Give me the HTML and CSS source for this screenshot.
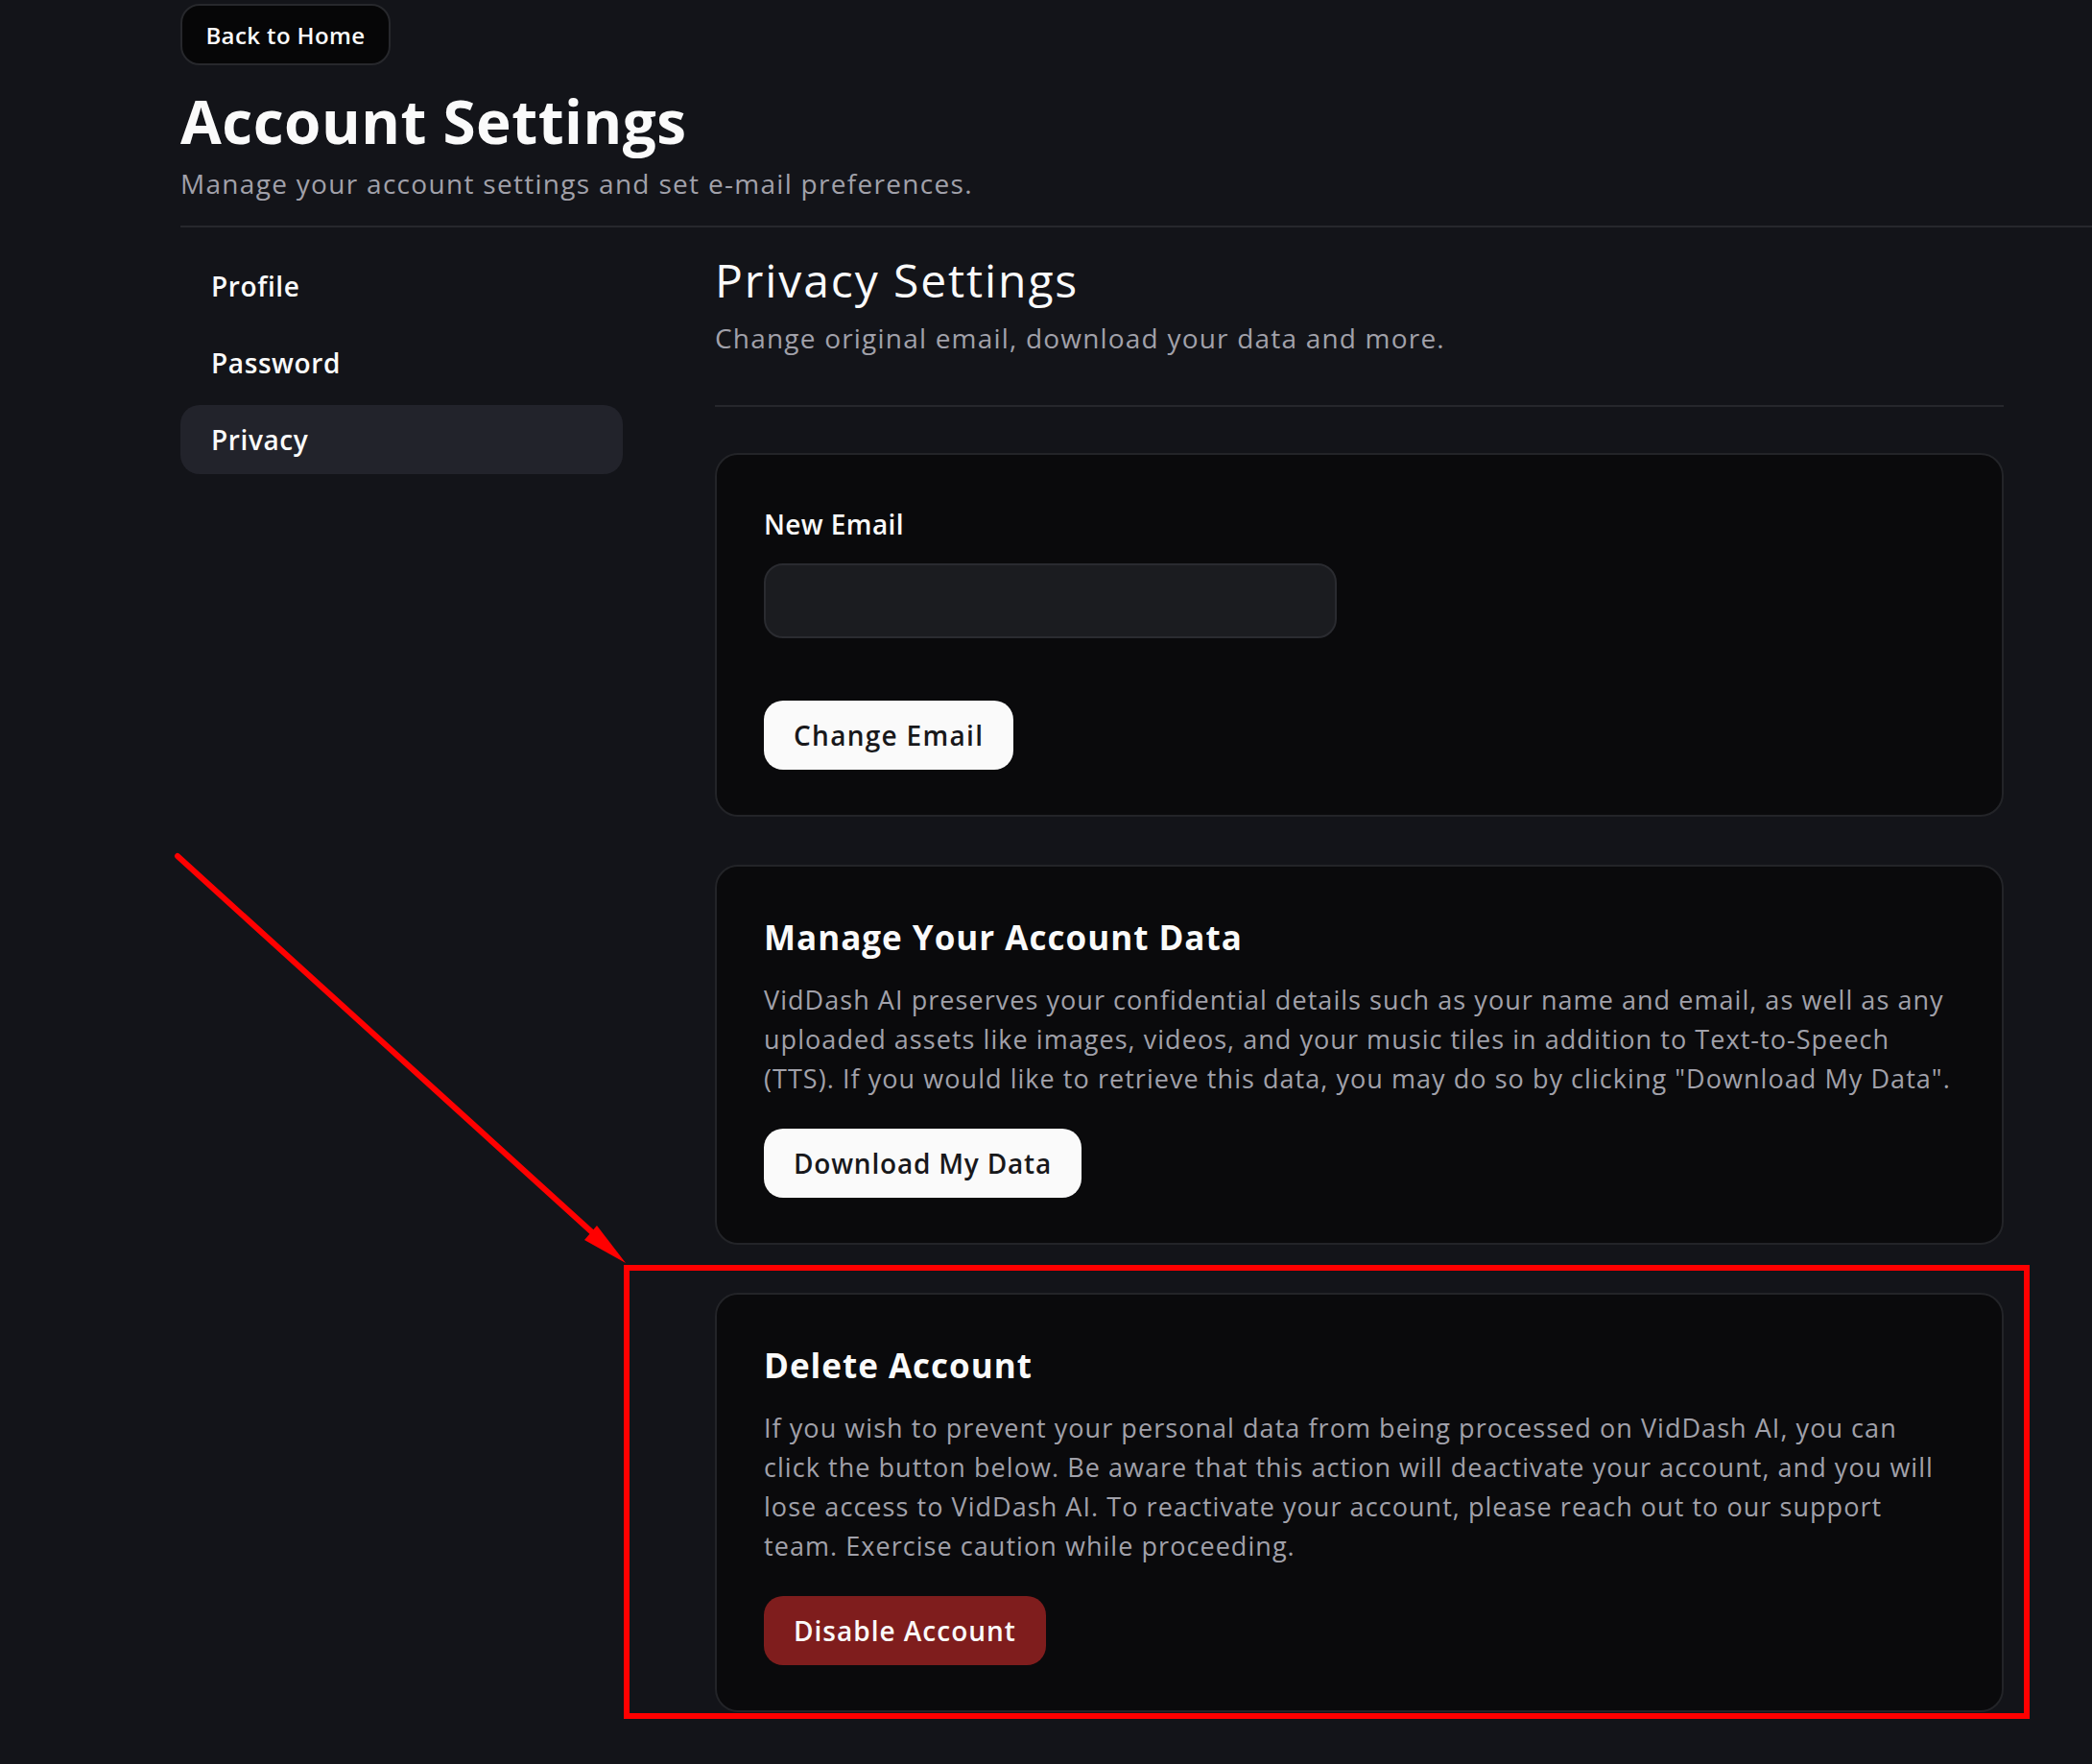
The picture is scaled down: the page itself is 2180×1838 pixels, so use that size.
FILE: index.html
```html
<!DOCTYPE html>
<html lang="en">
<head>
<meta charset="utf-8">
<title>Account Settings</title>
<link rel="stylesheet" href="styles.css">
</head>
<body>
<div class="page">
  <header class="header">
    <a class="back-btn" href="#">Back to Home</a>
    <h1 class="title">Account Settings</h1>
    <p class="subtitle">Manage your account settings and set e-mail preferences.</p>
  </header>
  <div class="divider"></div>
  <div class="layout">
    <nav class="sidebar">
      <a class="nav-item" href="#">Profile</a>
      <a class="nav-item" href="#">Password</a>
      <a class="nav-item active" href="#">Privacy</a>
    </nav>
    <main class="main">
      <h2 class="section-title">Privacy Settings</h2>
      <p class="section-sub">Change original email, download your data and more.</p>
      <div class="main-divider"></div>
      <div class="cards">
        <section class="card">
          <label class="field-label" for="new-email">New Email</label>
          <input class="field-input" id="new-email" type="email">
          <button class="btn btn-light btn-email">Change Email</button>
        </section>
        <section class="card">
          <h3 class="card-title">Manage Your Account Data</h3>
          <p class="card-text">VidDash AI preserves your confidential details such as your name and email, as well as any<br>uploaded assets like images, videos, and your music tiles in addition to Text-to-Speech<br>(TTS). If you would like to retrieve this data, you may do so by clicking "Download My Data".</p>
          <button class="btn btn-light btn-download">Download My Data</button>
        </section>
        <section class="card">
          <h3 class="card-title">Delete Account</h3>
          <p class="card-text">If you wish to prevent your personal data from being processed on VidDash AI, you can<br>click the button below. Be aware that this action will deactivate your account, and you will<br>lose access to VidDash AI. To reactivate your account, please reach out to our support<br>team. Exercise caution while proceeding.</p>
          <button class="btn btn-danger">Disable Account</button>
        </section>
      </div>
    </main>
  </div>
</div>
<svg class="annotation" width="2180" height="1838" viewBox="0 0 2180 1838" aria-hidden="true">
  <line x1="185" y1="892" x2="628" y2="1294" stroke="#ff0000" stroke-width="6" stroke-linecap="round"/>
  <polygon points="652,1316 609,1292 622,1277" fill="#ff0000"/>
  <rect x="653" y="1321" width="1459" height="467" fill="none" stroke="#ff0000" stroke-width="6"/>
</svg>
</body>
</html>
```
FILE: styles.css
```css
* {
  box-sizing: border-box;
  margin: 0;
  padding: 0;
}

html, body {
  background: #131419;
}

body {
  position: relative;
  width: 2180px;
  min-height: 1838px;
  overflow: hidden;
  font-family: "Open Sans", "Noto Sans", sans-serif;
  color: #fafafa;
}

.page {
  padding: 4px 0 0 188px;
}

.back-btn {
  display: flex;
  align-items: center;
  justify-content: center;
  width: 219px;
  height: 64px;
  background: #060607;
  border: 2px solid #27282c;
  border-radius: 20px;
  font-size: 24px;
  font-weight: 600;
  letter-spacing: 0.4px;
  color: #fafafa;
  text-decoration: none;
}

.title {
  margin-top: 21px;
  font-size: 62px;
  line-height: 74px;
  font-weight: 700;
  letter-spacing: 0.5px;
}

.subtitle {
  margin-top: 8px;
  font-size: 28px;
  line-height: 40px;
  color: #a1a1aa;
  letter-spacing: 1.3px;
}

.divider {
  margin-top: 24px;
  height: 2px;
  background: #26272c;
}

.layout {
  display: flex;
  gap: 96px;
  padding: 25px 92px 0 0;
}

.sidebar {
  flex: 0 0 461px;
  display: flex;
  flex-direction: column;
  gap: 8px;
}

.nav-item {
  display: flex;
  align-items: center;
  height: 72px;
  padding: 0 32px;
  border-radius: 20px;
  font-size: 28px;
  font-weight: 600;
  letter-spacing: 0.6px;
  color: #fafafa;
  text-decoration: none;
}

.nav-item.active {
  background: #22232b;
}

.main {
  flex: 1;
}

.section-title {
  font-size: 48px;
  line-height: 60px;
  font-weight: 400;
  letter-spacing: 1.9px;
}

.section-sub {
  margin-top: 10px;
  font-size: 28px;
  line-height: 40px;
  color: #a1a1aa;
  letter-spacing: 1.2px;
}

.main-divider {
  margin-top: 50px;
  height: 2px;
  background: #26272c;
}

.cards {
  margin-top: 48px;
  display: flex;
  flex-direction: column;
  gap: 50px;
}

.card {
  display: flex;
  flex-direction: column;
  align-items: flex-start;
  background: #0a0a0c;
  border: 2px solid #232428;
  border-radius: 24px;
  padding: 50px 49px 47px;
}

.field-label {
  margin-top: 2px;
  font-size: 28px;
  line-height: 40px;
  font-weight: 600;
  letter-spacing: 0.4px;
}

.field-input {
  margin-top: 21px;
  width: 597px;
  height: 78px;
  background: #1b1c20;
  border: 2px solid #2a2b30;
  border-radius: 20px;
  outline: none;
}

.card-title {
  font-size: 35px;
  line-height: 48px;
  font-weight: 700;
  letter-spacing: 1px;
}

.card-text {
  margin-top: 20px;
  font-size: 27px;
  line-height: 41px;
  color: #a1a1aa;
  letter-spacing: 1.05px;
  white-space: nowrap;
}

.btn {
  display: flex;
  align-items: center;
  height: 72px;
  padding: 0 31px;
  border: none;
  border-radius: 20px;
  font-family: inherit;
  font-size: 28px;
  font-weight: 600;
  letter-spacing: 1px;
}

.btn-light {
  background: #fafafa;
  color: #18181b;
}

.btn-email {
  margin-top: 65px;
  letter-spacing: 1.3px;
}

.btn-download {
  margin-top: 32px;
  letter-spacing: 0.8px;
}

.btn-danger {
  margin-top: 32px;
  background: #7f1d1d;
  color: #fafafa;
}

.annotation {
  position: absolute;
  top: 0;
  left: 0;
  pointer-events: none;
}
```
